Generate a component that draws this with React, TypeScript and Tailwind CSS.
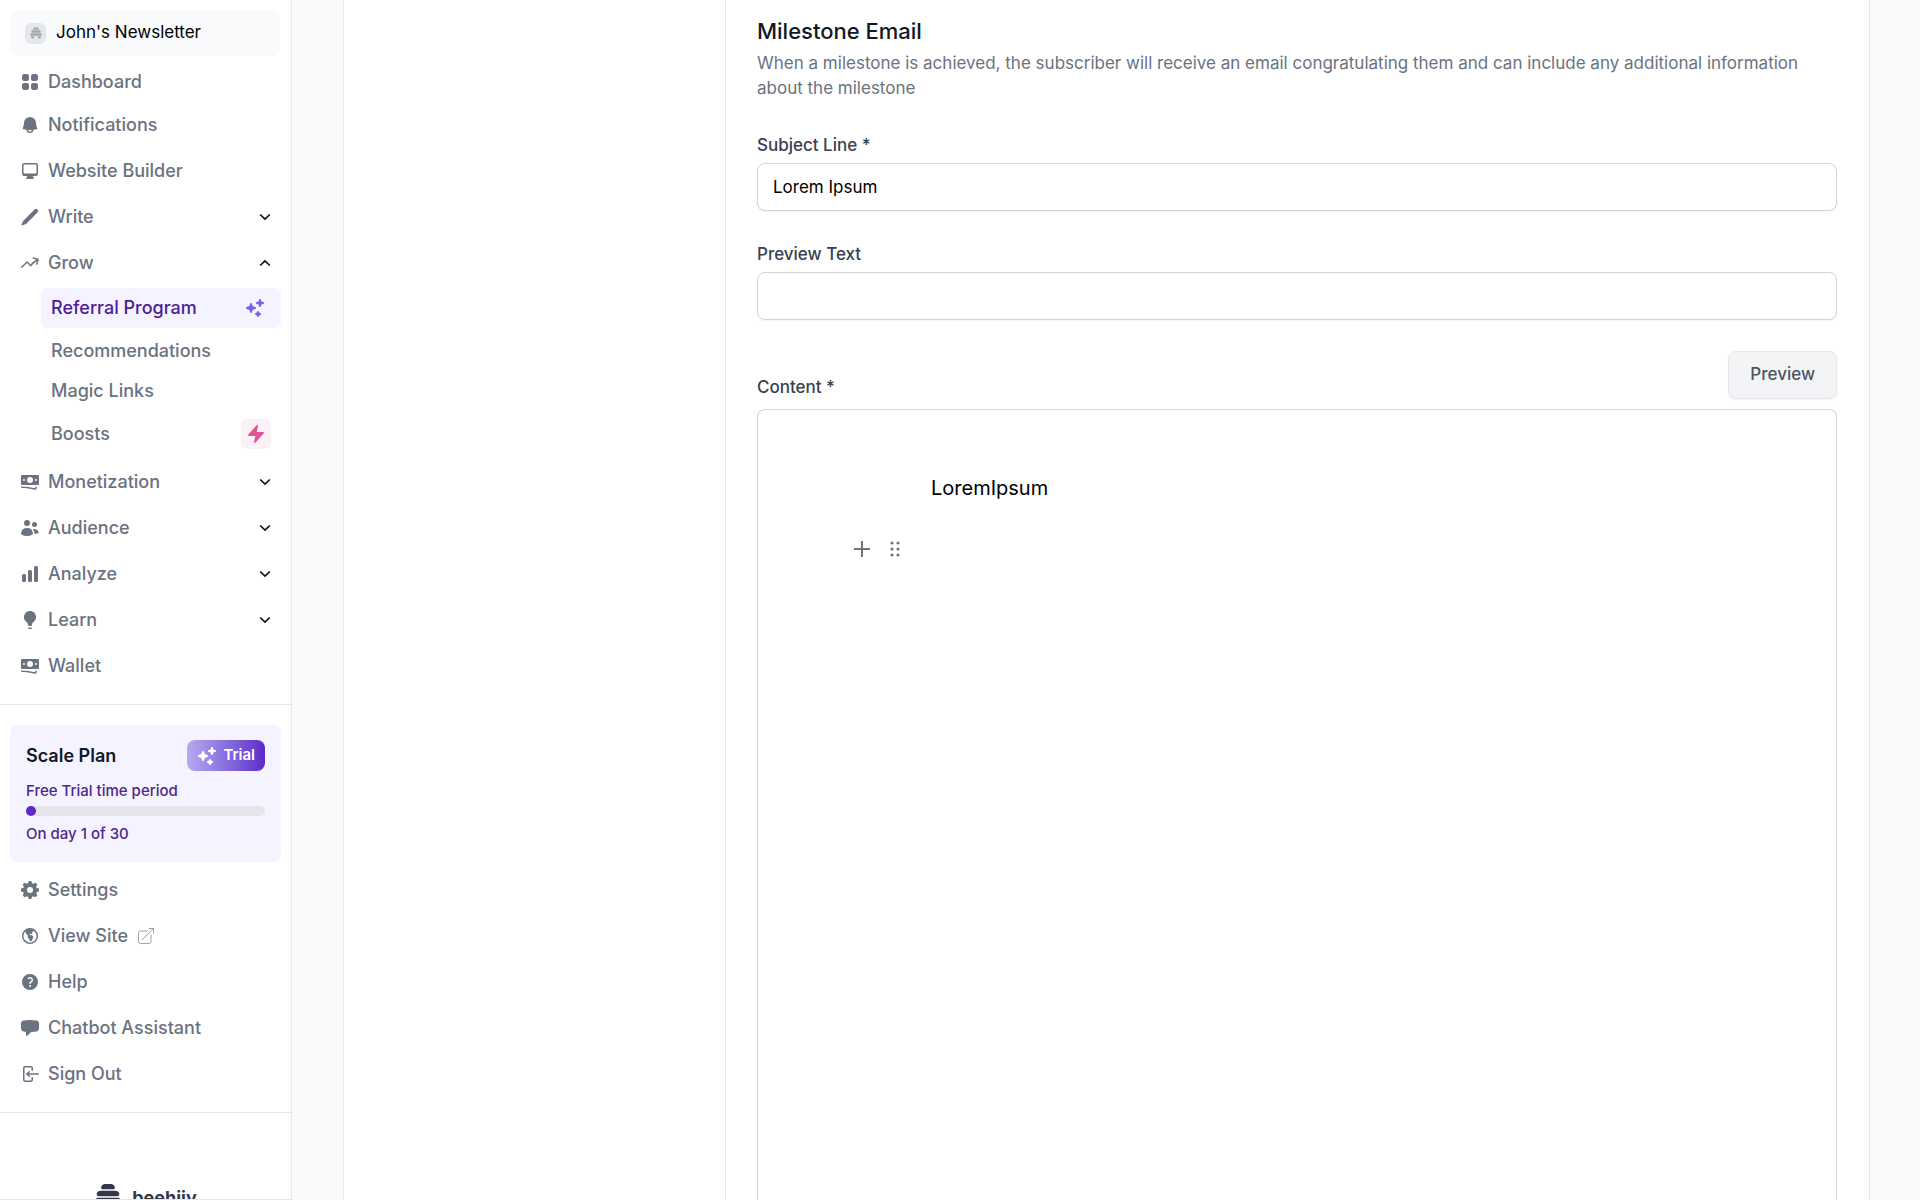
import { clsx } from "clsx";
import type { IconType } from "react-icons";
import {
  HiMiniArrowLeftOnRectangle,
  HiMiniArrowTrendingUp,
  HiMiniBanknotes,
  HiMiniBell,
  HiMiniBolt,
  HiMiniChartBar,
  HiMiniChatBubbleLeft,
  HiMiniCog8Tooth,
  HiMiniComputerDesktop,
  HiMiniGlobeAmericas,
  HiMiniLightBulb,
  HiMiniPencil,
  HiMiniQuestionMarkCircle,
  HiMiniSparkles,
  HiMiniSquares2X2,
  HiMiniUsers,
  HiOutlineArrowTopRightOnSquare,
} from "react-icons/hi2";

const Chevron = ({ up }: { up?: boolean }) => (
  <svg viewBox="0 0 12 12" className="size-3" fill="none" stroke="#111" strokeWidth="1.7">
    <path d={up ? "M1.2 8.5 6 3.9l4.8 4.6" : "M1.2 3.5 6 8.1l4.8-4.6"} />
  </svg>
);

const Hive = ({ className }: { className?: string }) => (
  <svg viewBox="0 0 28 26" className={className} fill="currentColor">
    <path d="M11 0h6c2 0 3.500 1.600 3.800 3.200.2 1.200-.3 2.100-1.500 2.100H8.700c-1.200 0-1.700-.9-1.500-2.100C7.500 1.600 9 0 11 0z" />
    <path d="M6.500 6.800h15c2 0 3.800 1.500 3.800 3.200 0 1.300-.8 2.300-2 2.300H4.700c-1.200 0-2-1-2-2.300 0-1.700 1.800-3.200 3.800-3.200z" />
    <path d="M5 13.800h18c2.600 0 4.600 1.500 4.600 3.300 0 1.300-.8 2.200-2 2.200H2.400c-1.200 0-2-.9-2-2.200 0-1.800 2-3.300 4.600-3.300z" />
    <path d="M3.500 20.800h7.200c-.9 1-1.200 2.100-1.200 3.200v2H6c-2.500 0-3.800-1.600-3.800-3.400 0-1.200.5-1.800 1.300-1.800zM24.500 20.800h-7.200c.9 1 1.200 2.100 1.200 3.200v2H22c2.500 0 3.800-1.600 3.800-3.400 0-1.200-.5-1.800-1.300-1.800z" />
  </svg>
);

type NavItemProps = {
  icon: IconType;
  label: string;
  expanded?: boolean;
  external?: boolean;
};

const itemClass =
  "flex w-full items-center gap-2 px-5 text-lg leading-6 font-medium text-[#6b7280]";

const NavItem = ({ icon: Icon, label, expanded, external }: NavItemProps) => {
  if (expanded !== undefined) {
    return (
      <button type="button" aria-expanded={expanded} className={itemClass}>
        <Icon className="size-5" />
        <span className="flex-1 text-left">{label}</span>
        <Chevron up={expanded} />
      </button>
    );
  }
  return (
    <a href="#" className={itemClass}>
      <Icon className="size-5" />
      {label}
      {external && (
        <HiOutlineArrowTopRightOnSquare className="size-5 text-[#9ca3af]" strokeWidth={1.2} />
      )}
    </a>
  );
};

const subItemClass = "flex items-center justify-between pl-[10px] pr-4 text-lg leading-6 font-medium";

const GrowMenu = () => (
  <div className="mt-[-9px] mb-[-5px] ml-[41px] mr-[10px] flex flex-col">
    <a href="#" className={clsx(subItemClass, "h-10 rounded-md bg-[#f5f3ff] text-[#4c1d95]")}>
      Referral Program
      <HiMiniSparkles className="size-5 text-[#7c60e6]" />
    </a>
    <a href="#" className={clsx(subItemClass, "mt-[11px] text-[#6b7280]")}>
      Recommendations
    </a>
    <a href="#" className={clsx(subItemClass, "mt-4 text-[#6b7280]")}>
      Magic Links
    </a>
    <a href="#" className={clsx(subItemClass, "mt-3 h-[38px] text-[#6b7280]")}>
      Boosts
      <span className="-mr-[6px] flex size-[30px] items-center justify-center rounded-md bg-[#fcf1f6]">
        <HiMiniBolt className="size-5 text-[#dc5596]" />
      </span>
    </a>
  </div>
);

const PlanCard = () => (
  <div className="mx-[10px] mt-5 h-[137px] rounded-lg bg-[#f5f3ff] px-4 pt-[15px]">
    <div className="flex items-center justify-between">
      <p className="text-lg font-semibold text-[#111827]">Scale Plan</p>
      <span className="flex h-[31px] items-center gap-[6px] rounded-lg bg-linear-to-r from-[#b9a8ef] to-[#5f27c9] px-[10px] text-[15px] font-semibold text-white">
        <HiMiniSparkles className="size-5" />
        Trial
      </span>
    </div>
    <p className="mt-2 text-[15px] leading-6 font-medium text-[#4c2889]">Free Trial time period</p>
    <div className="mt-[3px] h-[10px] rounded-full bg-[#e5e5e9]">
      <div className="size-[10px] rounded-full bg-[#6127cd]" />
    </div>
    <p className="mt-[6px] text-[15px] leading-6 font-medium text-[#4c2889]">On day 1 of 30</p>
  </div>
);

const Sidebar = () => (
  <aside className="sticky top-0 h-screen w-[292px] shrink-0 overflow-hidden border-r border-b border-[#e5e7eb] bg-white">
    <button
      type="button"
      className="mx-[10px] mt-[10px] flex h-[46px] w-[270px] items-center gap-[10px] rounded-lg bg-[#f9fafb] px-[15px] text-[17px] text-black"
    >
      <span className="flex size-[21px] items-center justify-center rounded-md bg-[#e5e7eb] text-[#a3a8b1]">
        <Hive className="size-3" />
      </span>
      John's Newsletter
    </button>
    <nav className="mt-[14px] flex flex-col">
      <NavItem icon={HiMiniSquares2X2} label="Dashboard" />
      <div className="mt-[19px] flex flex-col gap-[22px]">
        <NavItem icon={HiMiniBell} label="Notifications" />
        <NavItem icon={HiMiniComputerDesktop} label="Website Builder" />
        <NavItem icon={HiMiniPencil} label="Write" expanded={false} />
        <NavItem icon={HiMiniArrowTrendingUp} label="Grow" expanded />
        <GrowMenu />
        <NavItem icon={HiMiniBanknotes} label="Monetization" expanded={false} />
        <NavItem icon={HiMiniUsers} label="Audience" expanded={false} />
        <NavItem icon={HiMiniChartBar} label="Analyze" expanded={false} />
        <NavItem icon={HiMiniLightBulb} label="Learn" expanded={false} />
        <NavItem icon={HiMiniBanknotes} label="Wallet" />
      </div>
    </nav>
    <hr className="mt-[26px] border-[#e5e7eb]" />
    <PlanCard />
    <nav className="mt-4 flex flex-col gap-[22px]">
      <NavItem icon={HiMiniCog8Tooth} label="Settings" />
      <NavItem icon={HiMiniGlobeAmericas} label="View Site" external />
      <NavItem icon={HiMiniQuestionMarkCircle} label="Help" />
      <NavItem icon={HiMiniChatBubbleLeft} label="Chatbot Assistant" />
      <NavItem icon={HiMiniArrowLeftOnRectangle} label="Sign Out" />
    </nav>
    <hr className="mt-[26px] border-[#e5e7eb]" />
    <div className="mt-[71px] flex items-start justify-center gap-[10px] text-[#343747]">
      <Hive className="h-[26px] w-7" />
      <span className="text-lg leading-7 font-bold">beehiiv</span>
    </div>
  </aside>
);

const labelClass = "block text-[17px] leading-6 font-medium text-[#374151]";
const inputClass =
  "mt-[6px] block h-12 w-full rounded-lg border border-[#d1d5db] bg-white px-[15px] text-[17px] text-black shadow-xs";

const MilestoneForm = () => (
  <form className="flex min-h-screen flex-1 flex-col border-l border-[#e5e7eb] pt-[17px] pr-8 pl-[31px]">
    <h2 className="text-[22px] leading-7 font-medium text-[#111827]">Milestone Email</h2>
    <p className="mt-[6px] text-[17px] leading-[25px] text-[#6b7280]">
      When a milestone is achieved, the subscriber will receive an email congratulating them and can
      include any additional information about the milestone
    </p>
    <label htmlFor="subject" className={clsx(labelClass, "mt-8")}>
      Subject Line *
    </label>
    <input id="subject" type="text" defaultValue="Lorem Ipsum" className={inputClass} />
    <label htmlFor="preview" className={clsx(labelClass, "mt-[31px]")}>
      Preview Text
    </label>
    <input id="preview" type="text" className={inputClass} />
    <div className="mt-[31px] flex items-end justify-between">
      <span id="content-label" className={labelClass}>
        Content *
      </span>
      <button
        type="button"
        className="h-12 rounded-lg border border-[#e5e7eb] bg-[#f3f4f6] px-[21px] text-[17px] font-medium text-[#4b5563] shadow-xs"
      >
        Preview
      </button>
    </div>
    <div className="mt-[10px] flex-1 rounded-t-lg border border-b-0 border-[#d1d5db] pt-16 pl-[94px] shadow-xs">
      <div
        role="textbox"
        aria-labelledby="content-label"
        className="ml-[79px] text-xl leading-7 text-black"
      >
        LoremIpsum
      </div>
      <div className="mt-[37px] flex items-center gap-[13px] text-[#737373]">
        <button type="button" aria-label="Add block">
          <svg viewBox="0 0 20 20" className="size-5" stroke="currentColor" strokeWidth="2">
            <path d="M10 2v16M2 10h16" />
          </svg>
        </button>
        <button type="button" aria-label="Move block">
          <svg viewBox="0 0 20 20" className="size-5" fill="currentColor">
            {[4, 10, 16].map((y) => (
              <g key={y}>
                <circle cx="7" cy={y} r="1.600" />
                <circle cx="13" cy={y} r="1.600" />
              </g>
            ))}
          </svg>
        </button>
      </div>
    </div>
  </form>
);

const App = () => {
  return (
    <div className="flex min-h-screen bg-[#f9fafb] font-['Inter',sans-serif]">
      <Sidebar />
      <main className="flex flex-1 pr-[50px] pl-[51px]">
        <div className="flex flex-1 border-x border-[#e5e7eb] bg-white">
          <div className="w-[381px] shrink-0" />
          <MilestoneForm />
        </div>
      </main>
    </div>
  );
};

export default App;
